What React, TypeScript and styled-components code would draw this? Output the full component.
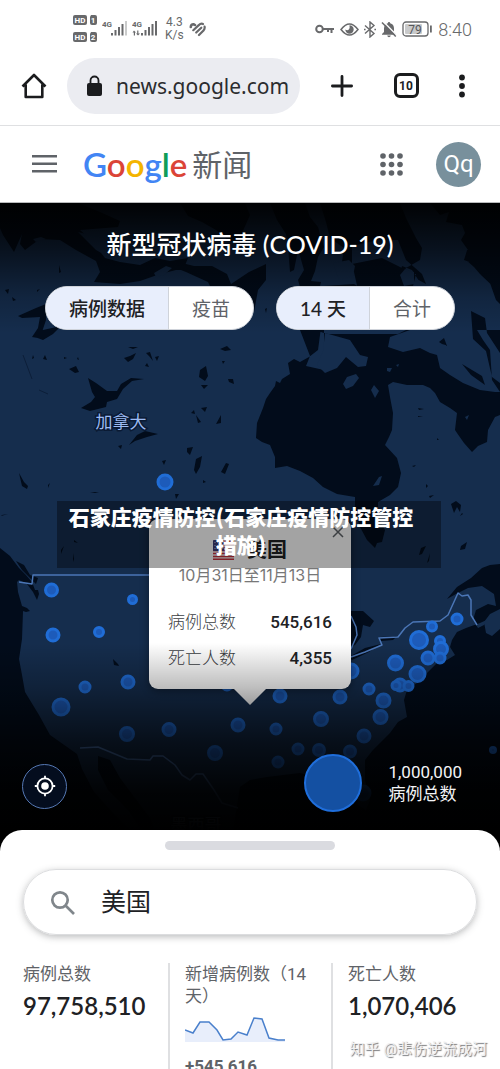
import React from "react";
import styled, { createGlobalStyle, css } from "styled-components";

const sans = `Roboto, "Noto Sans CJK SC", sans-serif`;
const display = `Lato, "Noto Sans CJK SC", sans-serif`;

const GlobalStyle = createGlobalStyle`
  *, *::before, *::after { box-sizing: border-box; }
  body { margin: 0; background: #fff; font-family: ${sans}; color: #202124; }
  button, input { font-family: inherit; color: inherit; border: 0; padding: 0; margin: 0; background: none; }
  svg { display: block; flex: none; }
  h1, h2, p, dl, dd { margin: 0; }
`;

const Screen = styled.div`
  position: relative;
  min-height: 100vh;
  max-height: 100vh;
  overflow: hidden;
  display: flex;
  flex-direction: column;
`;

/* ---------- status bar ---------- */

const StatusBar = styled.div`
  display: flex;
  flex: none;
  justify-content: space-between;
  height: 58px;
  padding: 0 28px 0 73px;
  color: #68696b;
`;

const StatusGroup = styled.div`
  display: flex;
  align-items: center;
  gap: 5px;
`;

const NetSpeed = styled.div`
  font-size: 12px;
  line-height: 13px;
  text-align: center;
  margin: 0 0 0 3px;
`;

const Clock = styled.time`
  font-size: 18px;
  font-weight: 300;
`;

const HdIcon = () => (
  <svg width="24" height="28" viewBox="0 0 24 28" fill="#68696b" fontFamily="Roboto" fontWeight="700">
    {[0, 17].map((y, i) => (
      <g key={y}>
        <rect x="0" y={y} width="14" height="10" rx="2" />
        <path d={`M18 ${y}h4q2 0 2 2v6q0 2-2 2h-3q-2 0-2-2v-6z`} />
        <text x="7" y={y + 8} fontSize="8" fill="#fff" textAnchor="middle">HD</text>
        <text x="20" y={y + 8} fontSize="8" fill="#fff" textAnchor="middle">{i + 1}</text>
      </g>
    ))}
  </svg>
);

const SignalIcon = ({ full }: { full?: boolean }) => (
  <svg width="25" height="18" viewBox="0 0 25 18" fill="#68696b">
    <text x="0" y="7" fontSize="8" fontWeight="700" fontFamily="Liberation Sans Narrow, Roboto">4G</text>
    {full && <path d="M2 10.500l2 2H3v3H1.800v-3H.5zM6 15.500l-2-2h1.200v-3h1.200v3H8z" />}
    <rect x="9" y="13" width="2" height="2.500" />
    <rect x="12.500" y="10" width="2" height="5.500" />
    <rect x="16" y="7" width="2" height="8.500" />
    <rect x="19.500" y="4" width="2" height="11.500" />
    <rect x="23" y="1" width="2" height="14.500" opacity={full ? 1 : 0.35} />
  </svg>
);

const HeartIcon = () => (
  <svg width="17" height="15" viewBox="0 0 17 15" fill="none" stroke="#68696b" strokeWidth="2.200" strokeLinecap="round">
    <path d="M1.800 5Q2 2 5 2.400L6 3" strokeWidth="2.600" />
    <path d="M4.300 8.200L9.500 3.400Q12 1 14 2" />
    <path d="M7.200 10.500L12.300 5.700" />
    <path d="M10 13L14.500 8.600Q16 6.800 15.600 4.600" />
  </svg>
);

const KeyIcon = () => (
  <svg width="20" height="12" viewBox="0 0 20 12" fill="none" stroke="#68696b" strokeWidth="2">
    <circle cx="4.500" cy="6" r="3.300" />
    <path d="M8 6h11M16.500 6v4M13 6v3" />
  </svg>
);

const EyeIcon = () => (
  <svg width="19" height="13" viewBox="0 0 19 13" fill="none" stroke="#68696b" strokeWidth="1.500">
    <path d="M1 6.500Q9.500-4.500 18 6.500Q9.500 17.500 1 6.500Z" />
    <path d="M9.500 2.300a4.200 4.200 0 1 1-4.200 4.200q2.200 1.300 3.500 0t.7-4.200z" fill="#68696b" stroke="none" />
  </svg>
);

const BluetoothIcon = () => (
  <svg width="12" height="17" viewBox="0 0 12 17" fill="none" stroke="#68696b" strokeWidth="1.400">
    <path d="M1 4.500l9 8-4 3.500V1l4 3.500-9 8" />
    <path d="M0 8.500h1.600M10.400 8.500H12" />
  </svg>
);

const BellOffIcon = () => (
  <svg width="16" height="17" viewBox="0 0 16 17">
    <path d="M8 1q1.200 0 1.200 1.200Q13 3.300 13 7.500V11l2 2v.7H1V13l2-2V7.500Q3 3.300 6.800 2.200 6.800 1 8 1zM6.200 14.500h3.600Q9.500 16.300 8 16.300t-1.800-1.800z" fill="#68696b" />
    <path d="M2.500.800L15.500 14" stroke="#fff" strokeWidth="1.400" />
    <path d="M1 1.500L14.800 15.500" stroke="#68696b" strokeWidth="1.500" />
  </svg>
);

const BatteryIcon = () => (
  <svg width="31" height="16" viewBox="0 0 31 16">
    <rect x="1" y="1" width="25" height="14" rx="3" fill="none" stroke="#68696b" strokeWidth="1.300" />
    <rect x="3" y="3" width="17" height="10" rx="1" fill="#c9cacb" />
    <rect x="28" y="4.500" width="1.800" height="7" fill="#68696b" />
    <text x="13" y="12.500" fontSize="12" fontFamily="Roboto" fill="#55575a" textAnchor="middle">79</text>
  </svg>
);

/* ---------- browser toolbar ---------- */

const BrowserBar = styled.nav`
  display: flex;
  flex: none;
  align-items: center;
  height: 68px;
  padding: 0 15px 12px 0;
  border-bottom: 1px solid #dfe0e2;
`;

const BarButton = styled.button<{ $w: number }>`
  width: ${(p) => p.$w}px;
  height: 48px;
  flex: none;
  display: grid;
  place-items: center;
`;

const AddressPill = styled.label`
  flex: 1;
  min-width: 0;
  height: 56px;
  margin-right: 10px;
  padding: 0 8px 0 19px;
  border-radius: 28px;
  background: #ebecf1;
  display: flex;
  align-items: center;
  gap: 13px;
`;

const AddressInput = styled.input`
  flex: 1;
  min-width: 0;
  font-family: "Noto Sans", sans-serif;
  font-size: 21px;
  line-height: 30px;
  color: #2b2c2f;
  outline: none;
`;

const TabCount = styled.span`
  display: grid;
  place-items: center;
  width: 25px;
  height: 25px;
  border: 3px solid #1b1c1e;
  border-radius: 6px;
  font-size: 12px;
  font-weight: 700;
`;

/* ---------- site header ---------- */

const SiteHeader = styled.header`
  display: flex;
  flex: none;
  align-items: center;
  height: 77px;
  padding: 0 19px 0 20px;
  border-bottom: 1px solid #b9babc;
`;

const Brand = styled.a`
  display: flex;
  align-items: center;
  gap: 5px;
  margin-left: 14px;
  margin-right: auto;
  text-decoration: none;
`;

const Wordmark = styled.span`
  font-family: ${display};
  font-size: 33px;
  line-height: 44px;
  font-weight: 600;
`;

const Letter = styled.span<{ $c: string }>`
  color: ${(p) => p.$c};
`;

const BrandSuffix = styled.span`
  padding-top: 3px;
  font-size: 30px;
  line-height: 44px;
  color: #5f6368;
`;

const Avatar = styled.button`
  width: 45px;
  height: 45px;
  margin-left: 21px;
  border-radius: 50%;
  background: #78909c;
  color: #fff;
  font-size: 24px;
  line-height: 45px;
`;

/* ---------- map ---------- */

const MapPanel = styled.main`
  position: relative;
  flex: none;
  display: flex;
  flex-direction: column;
  min-height: 648px;
  padding: 23px 0 39px;
  background: #020c1c;
  overflow: hidden;
`;

const MapCanvas = styled.svg`
  position: absolute;
  inset: 0;
  width: 100%;
  height: 100%;
`;

const MapShade = styled.div`
  position: absolute;
  inset: 0;
  pointer-events: none;
  background: linear-gradient(
    to bottom,
    rgba(0, 0, 0, 0.95) 0,
    rgba(0, 0, 0, 0.62) 45px,
    rgba(0, 0, 0, 0.18) 95px,
    transparent 130px,
    transparent 440px,
    rgba(0, 0, 0, 0.26) 485px,
    rgba(0, 0, 0, 0.68) 540px,
    rgba(0, 0, 0, 0.93) 590px,
    #000 630px
  );
`;

const MapTitle = styled.h1`
  position: relative;
  font-family: ${display};
  font-size: 25px;
  line-height: 36px;
  font-weight: 500;
  color: #fff;
  text-align: center;
`;

const Toggles = styled.div`
  position: relative;
  display: flex;
  justify-content: center;
  gap: 22px;
  margin-top: 24px;
`;

const Segmented = styled.div`
  display: flex;
  border: 1px solid #cfd3da;
  border-radius: 22px;
  background: #fff;
  overflow: hidden;
`;

const Segment = styled.button<{ $on?: boolean }>`
  height: 42px;
  padding: 2px 23px 0;
  font-family: ${display};
  font-size: 19px;
  line-height: 40px;
  color: #5f6368;
  ${(p) =>
    p.$on &&
    css`
      background: #e8eefc;
      color: #202124;
      font-weight: 500;
      border-right: 1px solid #cfd3da;
    `}
`;

const Callout = styled.section`
  position: absolute;
  top: 316px;
  left: 50%;
  width: 202px;
  transform: translateX(-50%);
  padding: 17px 19px 13px;
  border-radius: 9px;
  background: #fff;
  box-shadow: 0 2px 8px rgba(0, 0, 0, 0.4);
  &::after {
    content: "";
    position: absolute;
    top: 100%;
    left: 50%;
    margin-left: -16px;
    border: 16px solid transparent;
    border-top-color: #fff;
    border-bottom: 0;
  }
`;

const CalloutTitle = styled.h2`
  display: flex;
  align-items: center;
  justify-content: center;
  gap: 13px;
  font-size: 20px;
  line-height: 28px;
  font-weight: 700;
`;

const CloseButton = styled.button`
  position: absolute;
  top: 7px;
  right: 7px;
  width: 12px;
  height: 12px;
`;

const CalloutDate = styled.p`
  font-family: Inter, "Noto Sans CJK SC", sans-serif;
  font-size: 16px;
  line-height: 22px;
  text-align: center;
  white-space: nowrap;
  color: #777;
`;

const Figures = styled.dl`
  margin-top: 18px;
`;

const Figure = styled.div`
  display: flex;
  justify-content: space-between;
  font-size: 17px;
  line-height: 36px;
`;

const FigureName = styled.dt`
  font-weight: 300;
  color: #3c4043;
`;

const FigureValue = styled.dd`
  font-weight: 500;
`;

const MapFooter = styled.div`
  position: relative;
  display: flex;
  align-items: center;
  justify-content: space-between;
  margin-top: auto;
  padding: 0 38px 0 22px;
`;

const LocateButton = styled.button`
  width: 45px;
  height: 45px;
  margin-top: 6px;
  border: 1px solid #5578b4;
  border-radius: 50%;
  background: #040d1e;
  display: grid;
  place-items: center;
`;

const Legend = styled.div`
  display: flex;
  align-items: center;
  gap: 26px;
  font-size: 17px;
  line-height: 22px;
  color: #f3f4f6;
`;

const LegendDisc = styled.span`
  width: 58px;
  height: 58px;
  border: 2px solid #1f6edb;
  border-radius: 50%;
  background: #1450a2;
`;

const Caption = styled.p`
  position: absolute;
  top: 298px;
  left: 57px;
  right: 59px;
  padding: 1px 22px 10px 6px;
  background: rgba(0, 0, 0, 0.36);
  font-family: "Noto Sans CJK SC", sans-serif;
  font-size: 21px;
  line-height: 28px;
  font-weight: 900;
  text-align: center;
  color: #fff;
`;

type Dot = [number, number, number];

const dots: Dot[] = [
  [165, 482, 8], [51.5, 590, 7], [132.5, 599.5, 5], [53, 635, 7], [99, 632, 5.5], [128, 682, 7],
  [85, 687, 6], [61, 707, 9], [127, 734, 7.5], [169, 729.5, 7], [215, 753, 7.5], [238, 725, 7],
  [227, 685, 6], [280, 696, 7], [340, 697, 7], [276, 729, 6], [321, 719, 7.5], [351, 671, 8],
  [369, 689, 6], [383.5, 700.5, 7.5], [380.5, 717, 7.5], [364, 736, 7], [350, 751.5, 6.5],
  [319, 750, 6.5], [298, 749, 6], [278, 762, 6], [395.5, 663, 8], [419, 640, 9.5], [432, 626.5, 5.5],
  [457, 619, 6], [440, 641, 5.5], [441, 649, 7.5], [428, 658, 7], [440, 658, 6], [417.5, 674, 8.5],
  [400, 685, 7], [396, 685.5, 5], [408.5, 686, 5.5], [493, 750, 3.5], [363, 793, 8],
];

const water = [
  // Hudson Bay and Hudson Strait
  "M322 320L318 350 309 357 300 362 294 359 288 363 290 374 282 379 280 383 276 381 275 386 270 393 266 399 263 408 257 423 256 438 262 442 270 445 275 457 275 468 287 466 300 471 313 478 323 487 337 494 355 497 355 513 360 527 367 540 375 548 377 543 382 542 385 530 378 517 378 502 390 495 398 487 401 473 397 458 385 445 389 437 392 430 393 413 390 397 388 385 393 382 407 385 423 385 430 388 435 393 440 402 450 408 457 413 455 430 457 433 464 443 472 452 478 446 487 442 488 430 495 417 500 415V330H477L483 340 490 350 492 380 500 392 495 392 480 390 463 383 450 375 440 368 437 355 430 353 420 348 403 352 388 347 390 337 410 330V320z",
  // Greenland coast and Baffin Bay
  "M500 203H430L440 215 449 212 446 222 462 225 465 233 461 240 468 250 466 260 474 267 480 274 490 283 496 300 500 304z",
  "M464 260l8 3 9 12 19 18v-70l-25 2z",
  "M471 311l14 7 2 15 13 20v30l-8-6-6-26-13-12z",
  // Arctic channels
  "M0 203H78L100 212 120 221 118 227 80 230 92 241 105 258 120 262 140 265 155 258 170 261 188 258 184 268 160 274 140 281 120 284 94 282 100 272 96 261 76 250 60 240 40 239 33 244 25 250 20 244 22 234 14 252 3 235 0 228z",
  "M180 203h65l5 12-8 18 4 15-18-8-12-10-14-8-14-6z",
  "M178 262l16 4 18 0 15 8 4 10 18-12 17-8v16l-8 10-4 22-10-6-16-2-12-6-8-16-22-10-10-4z",
  "M270 203h35l5 14 8 10 6 20-6 10-3 14-4 10 10 1-2 8-8-4-3 10-6-2-4-14 6-10-4-14-2-6-4 20-4 2-2-26-2-12-9-14z",
  "M320 203h80l6 15 10 20 6 10-2 12-14 8-8 16-4 14-22-4-14-4-4-18-12-10 2-14-14-10-4-16z",
  "M352 264l30-6 20 10 14 6-4 16 8 6 6-12-4-10-16-14-8-20-20 0-26 6z",
  "M324 286l30-2 20 12 22-4 6-26 10 4 14 22-4 8-12 0-4 30-8 4h-70l-14-4z",
  "M300 330l24 0v40l-18-4 4-10z",
  // Great Bear, Great Slave and neighbours
  "M18 316l18-8 10-4v16l-4 12-4 4 6 3-12-2 6-9 2-11-18 1z",
  "M31 337l12-7 18-4-8 8-10 6 0 0-8-3z",
  "M88 378l8 5 11 8h10l4-7 10-6 13 1-12 2-9 8-6 10-10 3-1 5-16 4-9-3 10-6 4-5-3-5z",
  "M129 445l8-10 8-4 13 3-11 3-12 4z",
  "M69 369l7-3 3 6-4 1z",
  // lakes around the Canadian shield
  "M200 370l6-4 2 10-3 5-6-4z",
  "M201 385h7l-4 4z M228 379l5 0 1 5-5-2z M220 349l7-3 4 4-6 1z M222 361l3 0-2 3z",
  "M201 408l6-1-2 5z M191 413l3-3 1 4z M196 415l5 7-3 1z M216 424l5-9 0 8z",
  "M187 448l6-1-3 8-3-3z M194 470l2-11 6-3-2 11-4 7z M221 472l5-9 3 1-4 10z M203 480l3 2-3 1z",
  "M124 358l6-2 6-3-3 6-5 3z M128 347l10 0-5 2z M146 353l4-1 3 9-4-5z M155 357l4-1-2 5z M145 366l2-3 2 4z",
  "M33 355l1 3-2 1z M45 355l2 5-4-1z M64 357l3 1-3 1z M78 357l1 3-2-1z",
  "M5 290l4-1-1 5z M12 297l4 3-3 1z M37 290l3-1-3 3z M59 265l2 7-2 1z M65 286l1 4-2 1z M265 309l2-1-1 5z",
  "M19 473l5 9 4 4-1 3-5-3z M118 446l4-1-1 4z M48 485l2-2-2 5z M90 492l9 0-4 1z M162 461l4-1-2 5z M175 494l4 0-3 5z M2 515l6-1-7 2z",
  "M412 466l4-1-2 2z M418 408l6 1-5 1z M426 484l2 2-2 2z M429 496l5-1-4 3z M418 416l5 1-5 0z M437 438l2 2-2 0z",
  "M451 504l5-3 5 4-1 7-3-5-3 6z M462 513l-2 3 3-2z M461 546l6-4-2 7-5 1z M421 548l5-2-4 8-3 1z M430 553l-1 8-2 2z",
  "M439 342l5-4 3 8 2 0-7-2z M462 364l20 12 3 9-14-10z M74 540l4 3-4-1z M61 550l3-4-3 8z M73 553l1 6-1 3z",
  // Gulf of St Lawrence
  "M447 599l10-12 14-9 11-10 8-3 10-1v50l-8 3-8 8-6 3-5-8 3-10 12-6 8 2-2-12-12-8-14 2-12 6z",
  // Great Lakes
  "M351 611l12 0 11 10-4 6-7-2-2 12-6 8-6 3z M349 657l16-9 16-4-12 8-17 8z M379 637l18-1-4 4-12 1z",
  "M113 659l5 5 1 2-5-1z",
  // Pacific
  "M0 548l10 8 9 12 6 6 7 8 3 8 3 0 1 4-2 6-4-8-6-8-8-4-2 2 1 10 4 14 5 2 3 3-4 1-3-1-1 28-3 20 3 16 3 17 14 23 11 20 27 19 5 15 12 23 20 22 25 25H0z",
  "M16 561l8 4 6 10 8 3-2 6-6-6-8-8z",
  "M98 756l12 4 10 18 15 20 15 20 8 22h-10l-20-30-20-20-10-20z",
  // Atlantic and the Gulf of Mexico
  "M500 614L480 623 466 628 457 632 452 640 450 647 455 655 447 660 437 663 425 675 417 683 407 690 404 700 407 717 398 722 390 733 373 750 365 760 365 780 370 800 366 810 358 805 353 780 337 773 318 778 300 773 267 777 250 780 240 787 236 812 230 850H500z",
];

const land = [
  "M325 333l25 7 10 15 8 2-2 9-8 1-12-10-9 11-12 5-8-8 6-14z",
  "M347 377l9-3 3 4-6 8-7 3-3-5z M374 385l5 6-4 7-4-8z M379 477l3-1-3 9-6 1z M387 368l5 0-2 4-3-1z M396 365l3-1-1 3z",
  "M33 239l8-2 5 2-10 3z M78 232l26 6 28 4 18 12-14 10-10-8-16 2-14-8z M154 273l12-7 6 2-8 7-8 2z",
  "M333 263l16-3 6 6-2 10-14 4z M400 275l5-6 9 3 0 12-10 2z M415 278l11 6 0 4-9-3z M318 222l8 3-2 12-4-2z",
  "M484 622l6-8 10-5v20l-8 7-6-3z M465 417l4-2-2 5z",
];

const borders = [
  "M19 582L32 584 33 575H160",
  "M351 616l5 11 1 8-6 14",
  "M351 657L365 652 382 645 379 638 398 637 405 628 413 622 440 621 448 615 458 593 462 596 468 595 471 600V615L477 625",
  "M80 748L98 747 127 759 150 760 153 756H163L175 765 182 775 190 780 196 774H203L214 790 222 803 238 808",
];

const WorldMap = () => (
  <MapCanvas viewBox="0 203 500 648" preserveAspectRatio="xMidYMin slice" aria-hidden="true">
    <rect y="203" width="500" height="648" fill="#152d4d" />
    <path d={water.join(" ")} fill="#020c1b" fillRule="nonzero" />
    <path d={land.join(" ")} fill="#152d4d" />
    <path d={borders.join(" ")} fill="none" stroke="#4b76b6" strokeWidth="1.500" strokeLinejoin="round" />
    <path d="M23 355l9 24M39 390l9 4" stroke="#0a1b33" strokeWidth="0.800" />
    {dots.map(([cx, cy, r]) => (
      <circle key={`${cx}-${cy}`} cx={cx} cy={cy} r={r - 1} fill="#1d5bba" stroke="#206dd6" strokeWidth="3" />
    ))}
    <g fontFamily={sans} fontSize="17" textAnchor="middle" paintOrder="stroke" stroke="#0a1a33" strokeWidth="3">
      <text x="121" y="428" fill="#9dbcf3">加拿大</text>
      <text x="196" y="831" fill="#9dbcf3">墨西哥</text>
    </g>
  </MapCanvas>
);

const FlagIcon = () => (
  <svg width="21" height="20" viewBox="0 0 21 20">
    <rect width="21" height="20" rx="2" fill="#f4f1f1" />
    <path d="M0 1.500h21M0 4.500h21M0 7.500h21M0 10.500h21M0 13.500h21M0 16.500h21M0 19.200h21" stroke="#c9323f" strokeWidth="1.500" />
    <rect width="11" height="11" rx="1" fill="#3c3f78" />
    <path d="M1.500 2.500h9M1.500 5.500h9M1.500 8.500h9" stroke="#b9bbd6" strokeWidth="1" strokeDasharray="1 1.600" />
  </svg>
);

/* ---------- bottom sheet ---------- */

const Sheet = styled.section`
  position: relative;
  flex: none;
  margin-top: -21px;
  padding: 11px 23px 0;
  border-radius: 22px 22px 0 0;
  background: #fff;
`;

const Handle = styled.div`
  width: 170px;
  height: 9px;
  margin: 0 auto;
  border-radius: 5px;
  background: #dadbe0;
`;

const SearchBox = styled.label`
  display: flex;
  align-items: center;
  gap: 25px;
  height: 66px;
  margin-top: 19px;
  padding: 2px 26px 0;
  border: 1px solid #dcdddf;
  border-radius: 33px;
  box-shadow: 0 2px 7px rgba(60, 64, 67, 0.35);
`;

const SearchInput = styled.input`
  flex: 1;
  min-width: 0;
  font-size: 25px;
  line-height: 36px;
  outline: none;
`;

const Stats = styled.dl`
  display: grid;
  grid-template-columns: 145fr 163fr 146fr;
  margin-top: 28px;
`;

const Stat = styled.div`
  min-height: 116px;
  & + & {
    padding-left: 15px;
    border-left: 2px solid #dfe0e2;
  }
`;

const StatName = styled.dt`
  font-size: 17px;
  line-height: 22px;
  color: #5f6368;
`;

const StatValue = styled.dd`
  margin-top: 6px;
  font-family: ${display};
  font-size: 24px;
  line-height: 30px;
  font-weight: 600;
`;

const StatDelta = styled.dd`
  font-size: 17px;
  line-height: 24px;
  font-weight: 700;
  color: #5f6368;
`;

const Spark = styled.svg`
  margin: 8px 0 11px;
`;

const Watermark = styled.p`
  position: absolute;
  right: 13px;
  bottom: 8px;
  font-size: 15px;
  line-height: 24px;
  color: #f1f1f2;
  text-shadow: 1px 1px 1px #77797c;
`;

export default function App() {
  return (
    <Screen>
      <GlobalStyle />
      <StatusBar>
        <StatusGroup>
          <HdIcon />
          <SignalIcon />
          <SignalIcon full />
          <NetSpeed>4.3<br />K/s</NetSpeed>
          <HeartIcon />
        </StatusGroup>
        <StatusGroup>
          <KeyIcon />
          <EyeIcon />
          <BluetoothIcon />
          <BellOffIcon />
          <BatteryIcon />
          <Clock>8:40</Clock>
        </StatusGroup>
      </StatusBar>

      <BrowserBar>
        <BarButton $w={67} aria-label="Home">
          <svg width="26" height="26" viewBox="0 0 26 26" fill="none" stroke="#1b1c1e" strokeWidth="2.600" strokeLinejoin="round">
            <path d="M1.500 13.500L13 2l11.500 11.500M4.700 11.500V24h16.600V11.500" />
          </svg>
        </BarButton>
        <AddressPill>
          <svg width="17" height="22" viewBox="0 0 17 22">
            <rect x="1" y="8" width="15" height="13" rx="2" fill="#1b1c1e" />
            <path d="M4.500 8.500V5.500a4 4 0 0 1 8 0v3" fill="none" stroke="#1b1c1e" strokeWidth="1.800" />
          </svg>
          <AddressInput aria-label="Address" defaultValue="news.google.com" />
        </AddressPill>
        <BarButton $w={64} aria-label="New tab">
          <svg width="22" height="22" viewBox="0 0 22 22" stroke="#1b1c1e" strokeWidth="2.800" strokeLinecap="round">
            <path d="M11 1.400v19.200M1.400 11h19.200" />
          </svg>
        </BarButton>
        <BarButton $w={64} aria-label="Tabs">
          <TabCount>10</TabCount>
        </BarButton>
        <BarButton $w={47} aria-label="More">
          <svg width="6" height="24" viewBox="0 0 6 24" fill="#1b1c1e">
            <circle cx="3" cy="3.500" r="2.900" />
            <circle cx="3" cy="12" r="2.900" />
            <circle cx="3" cy="20.500" r="2.900" />
          </svg>
        </BarButton>
      </BrowserBar>

      <SiteHeader>
        <BarButton $w={49} aria-label="Menu">
          <svg width="25" height="18" viewBox="0 0 25 18" fill="#5f6368">
            <path d="M0 0h25v2.400H0zM0 7.500h25v2.400H0zM0 15h25v2.400H0z" />
          </svg>
        </BarButton>
        <Brand href="#">
          <Wordmark>
            <Letter $c="#4285f4">G</Letter>
            <Letter $c="#db4437">o</Letter>
            <Letter $c="#f4b400">o</Letter>
            <Letter $c="#4285f4">g</Letter>
            <Letter $c="#0f9d58">l</Letter>
            <Letter $c="#db4437">e</Letter>
          </Wordmark>
          <BrandSuffix>新闻</BrandSuffix>
        </Brand>
        <BarButton $w={48} aria-label="Apps">
          <svg width="23" height="23" viewBox="0 0 23 23" fill="#5f6368">
            {[3, 11.5, 20].map((y) => [3, 11.5, 20].map((x) => <circle key={`${x}-${y}`} cx={x} cy={y} r="2.800" />))}
          </svg>
        </BarButton>
        <Avatar>Qq</Avatar>
      </SiteHeader>

      <MapPanel>
        <WorldMap />
        <Callout>
          <CalloutTitle><FlagIcon />美国</CalloutTitle>
          <CloseButton aria-label="Close">
            <svg width="12" height="12" viewBox="0 0 12 12" stroke="#5f6368" strokeWidth="1.500">
              <path d="M1 1l10 10M11 1L1 11" />
            </svg>
          </CloseButton>
          <CalloutDate>10月31日至11月13日</CalloutDate>
          <Figures>
            <Figure><FigureName>病例总数</FigureName><FigureValue>545,616</FigureValue></Figure>
            <Figure><FigureName>死亡人数</FigureName><FigureValue>4,355</FigureValue></Figure>
          </Figures>
        </Callout>
        <MapShade />
        <MapTitle>新型冠状病毒 (COVID-19)</MapTitle>
        <Toggles>
          <Segmented>
            <Segment $on aria-pressed="true">病例数据</Segment>
            <Segment aria-pressed="false">疫苗</Segment>
          </Segmented>
          <Segmented>
            <Segment $on aria-pressed="true">14 天</Segment>
            <Segment aria-pressed="false">合计</Segment>
          </Segmented>
        </Toggles>
        <MapFooter>
          <LocateButton aria-label="Locate">
            <svg width="22" height="22" viewBox="0 0 22 22" fill="none" stroke="#fff" strokeWidth="1.800">
              <circle cx="11" cy="11" r="7.600" />
              <circle cx="11" cy="11" r="3.800" fill="#fff" stroke="none" />
              <path d="M11 .8v3M11 18.200v3M.8 11h3M18.200 11h3" />
            </svg>
          </LocateButton>
          <Legend>
            <LegendDisc />
            <div>1,000,000<br />病例总数</div>
          </Legend>
        </MapFooter>
        <Caption>石家庄疫情防控(石家庄疫情防控管控措施)</Caption>
      </MapPanel>

      <Sheet>
        <Handle />
        <SearchBox>
          <svg width="26" height="26" viewBox="0 0 26 26" fill="none" stroke="#80868b" strokeWidth="2.700">
            <circle cx="10" cy="10" r="7.700" />
            <path d="M15.500 15.500l8.500 8.500" />
          </svg>
          <SearchInput aria-label="Location" defaultValue="美国" />
        </SearchBox>
        <Stats>
          <Stat>
            <StatName>病例总数</StatName>
            <StatValue>97,758,510</StatValue>
          </Stat>
          <Stat>
            <StatName>新增病例数（14 天）</StatName>
            <dd>
              <Spark width="100" height="28" viewBox="0 0 100 28">
                <path d="M0 15L8 18 15 7H24L32 15 38 25 46 24 53 17 62 20 69 3 77 4 84 23 93 25H100V27H0z" fill="#e8eefb" />
                <path d="M0 15L8 18 15 7H24L32 15 38 25 46 24 53 17 62 20 69 3 77 4 84 23 93 25H100" fill="none" stroke="#4a80cc" strokeWidth="1.500" />
              </Spark>
            </dd>
            <StatDelta>+545,616</StatDelta>
          </Stat>
          <Stat>
            <StatName>死亡人数</StatName>
            <StatValue>1,070,406</StatValue>
          </Stat>
        </Stats>
      </Sheet>
      <Watermark>知乎 @悲伤逆流成河</Watermark>
    </Screen>
  );
}
